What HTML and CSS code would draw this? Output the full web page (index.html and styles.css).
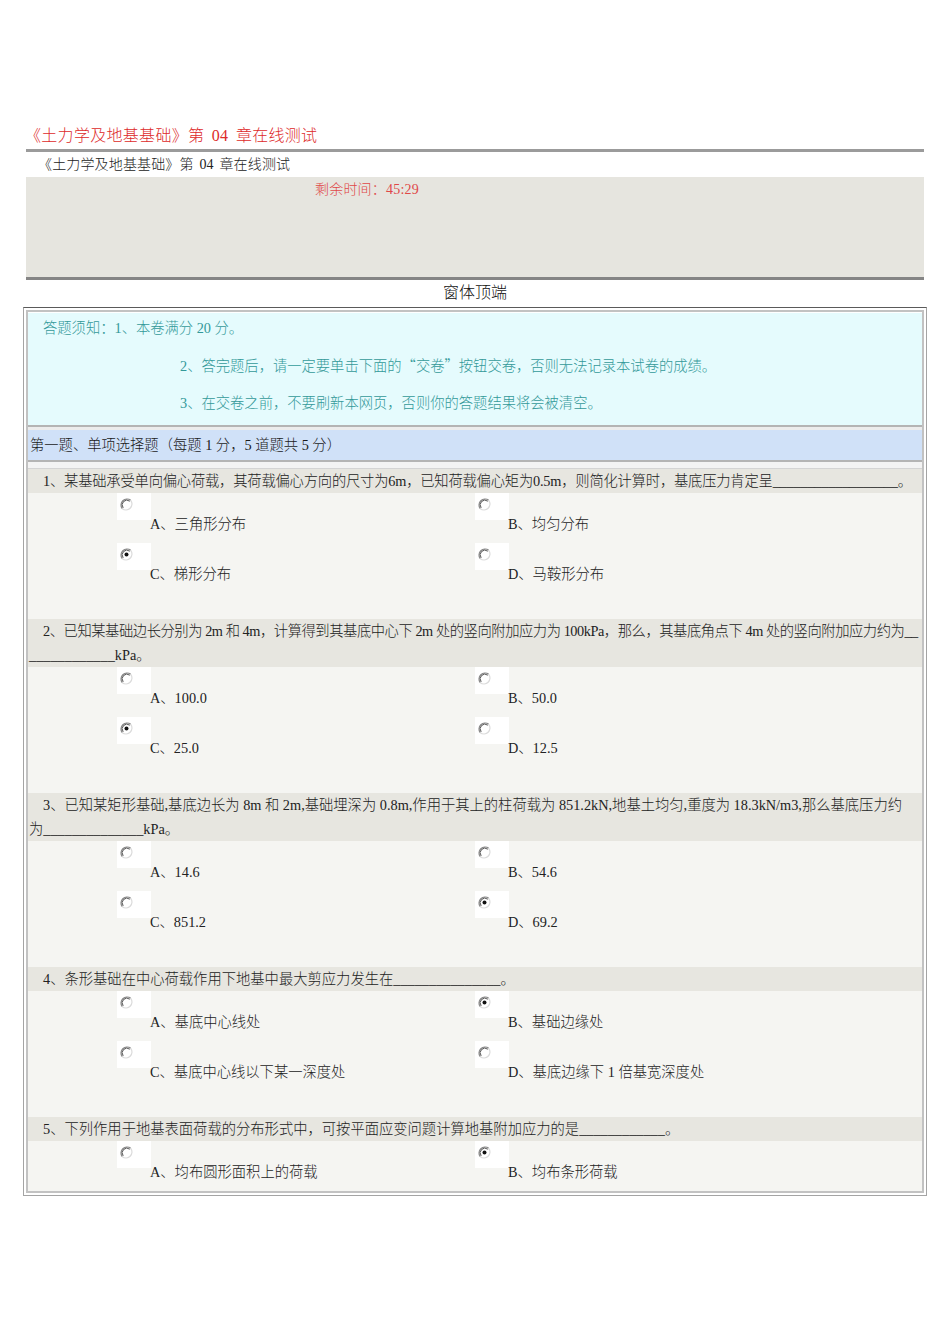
FILE: index.html
```html
<!DOCTYPE html>
<html lang="zh-CN">
<head>
<meta charset="utf-8">
<title>《土力学及地基基础》第 04 章在线测试</title>
<link rel="stylesheet" href="styles.css">
</head>
<body>
<div class="page">
  <h1 class="title">《土力学及地基基础》第 04 章在线测试</h1>
  <div class="rule"></div>
  <div class="subtitle">《土力学及地基基础》第 04 章在线测试</div>
  <div class="timerbox"><div class="timer">剩余时间：45:29</div></div>
  <div class="formtop">窗体顶端</div>

  <div class="paper">
    <div class="paper-inner">
      <div class="instr">
        <div class="il il1">答题须知：1、本卷满分 20 分。</div>
        <div class="il il2">2、答完题后，请一定要单击下面的<span class="cjk">“交卷”</span>按钮交卷，否则无法记录本试卷的成绩。</div>
        <div class="il il2">3、在交卷之前，不要刷新本网页，否则你的答题结果将会被清空。</div>
      </div>
      <div class="sep"></div>
      <div class="section">第一题、单项选择题（每题 1 分，5 道题共 5 分）</div>
      <div class="sep2"></div>

      <div class="q">
        <div class="qh"><span class="tight1">1、某基础承受单向偏心荷载，其荷载偏心方向的尺寸为6m，已知荷载偏心矩为0.5m，则简化计算时，基底压力肯定呈__________________。</span></div>
        <div class="opts">
          <div class="opt"><span class="rbox"><svg class="radio" width="13" height="13" viewBox="0 0 13 13"><circle cx="6.5" cy="6.5" r="5.5" fill="#fff"/><path d="M2.3 10.7A6 6 0 0 1 10.7 2.3" fill="none" stroke="#8a8a8a" stroke-width="1.4"/><path d="M10.7 2.3A6 6 0 0 1 2.3 10.7" fill="none" stroke="#dcdcdc" stroke-width="1.4"/><path d="M3.2 9.8A4.7 4.7 0 0 1 9.8 3.2" fill="none" stroke="#555" stroke-width="1"/></svg></span><div class="lbl">A、三角形分布</div></div>
          <div class="opt"><span class="rbox"><svg class="radio" width="13" height="13" viewBox="0 0 13 13"><circle cx="6.5" cy="6.5" r="5.5" fill="#fff"/><path d="M2.3 10.7A6 6 0 0 1 10.7 2.3" fill="none" stroke="#8a8a8a" stroke-width="1.4"/><path d="M10.7 2.3A6 6 0 0 1 2.3 10.7" fill="none" stroke="#dcdcdc" stroke-width="1.4"/><path d="M3.2 9.8A4.7 4.7 0 0 1 9.8 3.2" fill="none" stroke="#555" stroke-width="1"/></svg></span><div class="lbl">B、均匀分布</div></div>
          <div class="opt"><span class="rbox"><svg class="radio" width="13" height="13" viewBox="0 0 13 13"><circle cx="6.5" cy="6.5" r="5.5" fill="#fff"/><path d="M2.3 10.7A6 6 0 0 1 10.7 2.3" fill="none" stroke="#8a8a8a" stroke-width="1.4"/><path d="M10.7 2.3A6 6 0 0 1 2.3 10.7" fill="none" stroke="#dcdcdc" stroke-width="1.4"/><path d="M3.2 9.8A4.7 4.7 0 0 1 9.8 3.2" fill="none" stroke="#555" stroke-width="1"/><circle cx="6.5" cy="6.5" r="2" fill="#111"/></svg></span><div class="lbl">C、梯形分布</div></div>
          <div class="opt"><span class="rbox"><svg class="radio" width="13" height="13" viewBox="0 0 13 13"><circle cx="6.5" cy="6.5" r="5.5" fill="#fff"/><path d="M2.3 10.7A6 6 0 0 1 10.7 2.3" fill="none" stroke="#8a8a8a" stroke-width="1.4"/><path d="M10.7 2.3A6 6 0 0 1 2.3 10.7" fill="none" stroke="#dcdcdc" stroke-width="1.4"/><path d="M3.2 9.8A4.7 4.7 0 0 1 9.8 3.2" fill="none" stroke="#555" stroke-width="1"/></svg></span><div class="lbl">D、马鞍形分布</div></div>
        </div>
      </div>

      <div class="q">
        <div class="qh"><span class="tight2">2、已知某基础边长分别为 2m 和 4m，计算得到其基底中心下 2m 处的竖向附加应力为 100kPa，那么，其基底角点下 4m 处的竖向附加应力约为__</span><br>____________kPa。</div>
        <div class="opts">
          <div class="opt"><span class="rbox"><svg class="radio" width="13" height="13" viewBox="0 0 13 13"><circle cx="6.5" cy="6.5" r="5.5" fill="#fff"/><path d="M2.3 10.7A6 6 0 0 1 10.7 2.3" fill="none" stroke="#8a8a8a" stroke-width="1.4"/><path d="M10.7 2.3A6 6 0 0 1 2.3 10.7" fill="none" stroke="#dcdcdc" stroke-width="1.4"/><path d="M3.2 9.8A4.7 4.7 0 0 1 9.8 3.2" fill="none" stroke="#555" stroke-width="1"/></svg></span><div class="lbl">A、100.0</div></div>
          <div class="opt"><span class="rbox"><svg class="radio" width="13" height="13" viewBox="0 0 13 13"><circle cx="6.5" cy="6.5" r="5.5" fill="#fff"/><path d="M2.3 10.7A6 6 0 0 1 10.7 2.3" fill="none" stroke="#8a8a8a" stroke-width="1.4"/><path d="M10.7 2.3A6 6 0 0 1 2.3 10.7" fill="none" stroke="#dcdcdc" stroke-width="1.4"/><path d="M3.2 9.8A4.7 4.7 0 0 1 9.8 3.2" fill="none" stroke="#555" stroke-width="1"/></svg></span><div class="lbl">B、50.0</div></div>
          <div class="opt"><span class="rbox"><svg class="radio" width="13" height="13" viewBox="0 0 13 13"><circle cx="6.5" cy="6.5" r="5.5" fill="#fff"/><path d="M2.3 10.7A6 6 0 0 1 10.7 2.3" fill="none" stroke="#8a8a8a" stroke-width="1.4"/><path d="M10.7 2.3A6 6 0 0 1 2.3 10.7" fill="none" stroke="#dcdcdc" stroke-width="1.4"/><path d="M3.2 9.8A4.7 4.7 0 0 1 9.8 3.2" fill="none" stroke="#555" stroke-width="1"/><circle cx="6.5" cy="6.5" r="2" fill="#111"/></svg></span><div class="lbl">C、25.0</div></div>
          <div class="opt"><span class="rbox"><svg class="radio" width="13" height="13" viewBox="0 0 13 13"><circle cx="6.5" cy="6.5" r="5.5" fill="#fff"/><path d="M2.3 10.7A6 6 0 0 1 10.7 2.3" fill="none" stroke="#8a8a8a" stroke-width="1.4"/><path d="M10.7 2.3A6 6 0 0 1 2.3 10.7" fill="none" stroke="#dcdcdc" stroke-width="1.4"/><path d="M3.2 9.8A4.7 4.7 0 0 1 9.8 3.2" fill="none" stroke="#555" stroke-width="1"/></svg></span><div class="lbl">D、12.5</div></div>
        </div>
      </div>

      <div class="q">
        <div class="qh">3、已知某矩形基础,基底边长为 8m 和 2m,基础埋深为 0.8m,作用于其上的柱荷载为 851.2kN,地基土均匀,重度为 18.3kN/m3,那么基底压力约<br>为______________kPa。</div>
        <div class="opts">
          <div class="opt"><span class="rbox"><svg class="radio" width="13" height="13" viewBox="0 0 13 13"><circle cx="6.5" cy="6.5" r="5.5" fill="#fff"/><path d="M2.3 10.7A6 6 0 0 1 10.7 2.3" fill="none" stroke="#8a8a8a" stroke-width="1.4"/><path d="M10.7 2.3A6 6 0 0 1 2.3 10.7" fill="none" stroke="#dcdcdc" stroke-width="1.4"/><path d="M3.2 9.8A4.7 4.7 0 0 1 9.8 3.2" fill="none" stroke="#555" stroke-width="1"/></svg></span><div class="lbl">A、14.6</div></div>
          <div class="opt"><span class="rbox"><svg class="radio" width="13" height="13" viewBox="0 0 13 13"><circle cx="6.5" cy="6.5" r="5.5" fill="#fff"/><path d="M2.3 10.7A6 6 0 0 1 10.7 2.3" fill="none" stroke="#8a8a8a" stroke-width="1.4"/><path d="M10.7 2.3A6 6 0 0 1 2.3 10.7" fill="none" stroke="#dcdcdc" stroke-width="1.4"/><path d="M3.2 9.8A4.7 4.7 0 0 1 9.8 3.2" fill="none" stroke="#555" stroke-width="1"/></svg></span><div class="lbl">B、54.6</div></div>
          <div class="opt"><span class="rbox"><svg class="radio" width="13" height="13" viewBox="0 0 13 13"><circle cx="6.5" cy="6.5" r="5.5" fill="#fff"/><path d="M2.3 10.7A6 6 0 0 1 10.7 2.3" fill="none" stroke="#8a8a8a" stroke-width="1.4"/><path d="M10.7 2.3A6 6 0 0 1 2.3 10.7" fill="none" stroke="#dcdcdc" stroke-width="1.4"/><path d="M3.2 9.8A4.7 4.7 0 0 1 9.8 3.2" fill="none" stroke="#555" stroke-width="1"/></svg></span><div class="lbl">C、851.2</div></div>
          <div class="opt"><span class="rbox"><svg class="radio" width="13" height="13" viewBox="0 0 13 13"><circle cx="6.5" cy="6.5" r="5.5" fill="#fff"/><path d="M2.3 10.7A6 6 0 0 1 10.7 2.3" fill="none" stroke="#8a8a8a" stroke-width="1.4"/><path d="M10.7 2.3A6 6 0 0 1 2.3 10.7" fill="none" stroke="#dcdcdc" stroke-width="1.4"/><path d="M3.2 9.8A4.7 4.7 0 0 1 9.8 3.2" fill="none" stroke="#555" stroke-width="1"/><circle cx="6.5" cy="6.5" r="2" fill="#111"/></svg></span><div class="lbl">D、69.2</div></div>
        </div>
      </div>

      <div class="q">
        <div class="qh">4、条形基础在中心荷载作用下地基中最大剪应力发生在_______________。</div>
        <div class="opts">
          <div class="opt"><span class="rbox"><svg class="radio" width="13" height="13" viewBox="0 0 13 13"><circle cx="6.5" cy="6.5" r="5.5" fill="#fff"/><path d="M2.3 10.7A6 6 0 0 1 10.7 2.3" fill="none" stroke="#8a8a8a" stroke-width="1.4"/><path d="M10.7 2.3A6 6 0 0 1 2.3 10.7" fill="none" stroke="#dcdcdc" stroke-width="1.4"/><path d="M3.2 9.8A4.7 4.7 0 0 1 9.8 3.2" fill="none" stroke="#555" stroke-width="1"/></svg></span><div class="lbl">A、基底中心线处</div></div>
          <div class="opt"><span class="rbox"><svg class="radio" width="13" height="13" viewBox="0 0 13 13"><circle cx="6.5" cy="6.5" r="5.5" fill="#fff"/><path d="M2.3 10.7A6 6 0 0 1 10.7 2.3" fill="none" stroke="#8a8a8a" stroke-width="1.4"/><path d="M10.7 2.3A6 6 0 0 1 2.3 10.7" fill="none" stroke="#dcdcdc" stroke-width="1.4"/><path d="M3.2 9.8A4.7 4.7 0 0 1 9.8 3.2" fill="none" stroke="#555" stroke-width="1"/><circle cx="6.5" cy="6.5" r="2" fill="#111"/></svg></span><div class="lbl">B、基础边缘处</div></div>
          <div class="opt"><span class="rbox"><svg class="radio" width="13" height="13" viewBox="0 0 13 13"><circle cx="6.5" cy="6.5" r="5.5" fill="#fff"/><path d="M2.3 10.7A6 6 0 0 1 10.7 2.3" fill="none" stroke="#8a8a8a" stroke-width="1.4"/><path d="M10.7 2.3A6 6 0 0 1 2.3 10.7" fill="none" stroke="#dcdcdc" stroke-width="1.4"/><path d="M3.2 9.8A4.7 4.7 0 0 1 9.8 3.2" fill="none" stroke="#555" stroke-width="1"/></svg></span><div class="lbl">C、基底中心线以下某一深度处</div></div>
          <div class="opt"><span class="rbox"><svg class="radio" width="13" height="13" viewBox="0 0 13 13"><circle cx="6.5" cy="6.5" r="5.5" fill="#fff"/><path d="M2.3 10.7A6 6 0 0 1 10.7 2.3" fill="none" stroke="#8a8a8a" stroke-width="1.4"/><path d="M10.7 2.3A6 6 0 0 1 2.3 10.7" fill="none" stroke="#dcdcdc" stroke-width="1.4"/><path d="M3.2 9.8A4.7 4.7 0 0 1 9.8 3.2" fill="none" stroke="#555" stroke-width="1"/></svg></span><div class="lbl">D、基底边缘下 1 倍基宽深度处</div></div>
        </div>
      </div>

      <div class="q">
        <div class="qh">5、下列作用于地基表面荷载的分布形式中，可按平面应变问题计算地基附加应力的是____________。</div>
        <div class="opts last">
          <div class="opt"><span class="rbox"><svg class="radio" width="13" height="13" viewBox="0 0 13 13"><circle cx="6.5" cy="6.5" r="5.5" fill="#fff"/><path d="M2.3 10.7A6 6 0 0 1 10.7 2.3" fill="none" stroke="#8a8a8a" stroke-width="1.4"/><path d="M10.7 2.3A6 6 0 0 1 2.3 10.7" fill="none" stroke="#dcdcdc" stroke-width="1.4"/><path d="M3.2 9.8A4.7 4.7 0 0 1 9.8 3.2" fill="none" stroke="#555" stroke-width="1"/></svg></span><div class="lbl">A、均布圆形面积上的荷载</div></div>
          <div class="opt"><span class="rbox"><svg class="radio" width="13" height="13" viewBox="0 0 13 13"><circle cx="6.5" cy="6.5" r="5.5" fill="#fff"/><path d="M2.3 10.7A6 6 0 0 1 10.7 2.3" fill="none" stroke="#8a8a8a" stroke-width="1.4"/><path d="M10.7 2.3A6 6 0 0 1 2.3 10.7" fill="none" stroke="#dcdcdc" stroke-width="1.4"/><path d="M3.2 9.8A4.7 4.7 0 0 1 9.8 3.2" fill="none" stroke="#555" stroke-width="1"/><circle cx="6.5" cy="6.5" r="2" fill="#111"/></svg></span><div class="lbl">B、均布条形荷载</div></div>
        </div>
      </div>
    </div>
  </div>
</div>
</body>
</html>
```

FILE: styles.css
```css
html, body {
  margin: 0;
  padding: 0;
  background: #ffffff;
}

body {
  font-family: "Liberation Serif", "Noto Sans CJK SC", serif;
  font-weight: 300;
  color: #222222;
}

.cjk {
  font-family: "Noto Sans CJK SC", sans-serif;
}

.page {
  padding-top: 126px;
  padding-bottom: 20px;
}

.title {
  margin: 0 0 3px 25px;
  font-size: 16px;
  line-height: 20px;
  font-weight: 300;
  color: #dd2a2a;
  letter-spacing: 0.3px;
  word-spacing: 0.2em;
}

.rule {
  margin-left: 26px;
  width: 898px;
  height: 3px;
  background: #9b9b9b;
}

.subtitle {
  margin-left: 26px;
  padding-left: 12px;
  font-size: 14px;
  line-height: 25px;
  color: #222222;
  word-spacing: 0.15em;
  letter-spacing: 0.15px;
}

.timerbox {
  margin-left: 26px;
  width: 898px;
  height: 96px;
  padding-top: 4px;
  background: #e6e5df;
  border-bottom: 3px solid #858585;
}

.timer {
  margin-left: 289px;
  font-size: 14px;
  line-height: 18px;
  color: #e04848;
  letter-spacing: 0.2px;
}

.formtop {
  text-align: center;
  font-size: 16px;
  line-height: 26px;
  margin-bottom: 1px;
  color: #111111;
}

.paper {
  margin-left: 23px;
  width: 904px;
  box-sizing: border-box;
  border: 1px solid #a4a4a4;
  border-top-color: #5a5a5a;
  padding: 2px;
  background: #ffffff;
}

.paper-inner {
  border: 2px solid #c2c2c2;
  padding-top: 1px;
  font-size: 14.3px;
}

.instr {
  background: #e5fbfd;
  color: #339999;
  height: 112px;
  box-sizing: border-box;
  padding-top: 3px;
}

.il {
  line-height: 24px;
  white-space: nowrap;
}

.il1 {
  padding-left: 15px;
}

.il2 {
  padding-left: 152px;
  margin-top: 13px;
}

.sep {
  height: 3px;
  border-top: 2px solid #b4b4b4;
  background: #ececec;
}

.section {
  background: #d0e1f8;
  height: 30px;
  line-height: 30px;
  padding-left: 2px;
  color: #1a1a1a;
}

.sep2 {
  height: 6px;
  border-top: 2px solid #b4b4b4;
  border-bottom: 1px solid #d4d4d4;
  background: #f3f3f3;
}

.qh {
  background: #e7e6e0;
  line-height: 24px;
  padding-left: 1px;
  text-indent: 14px;
  color: #222222;
  white-space: nowrap;
}

.tight1 {
  letter-spacing: -0.2px;
}

.tight2 {
  letter-spacing: -0.45px;
}

.opts {
  background: #f5f5f2;
  padding: 0 0 26px 89px;
  display: grid;
  grid-template-columns: 358px 1fr;
}

.opts.last {
  padding-bottom: 0;
}

.opt {
  height: 50px;
}

.rbox {
  display: block;
  width: 34px;
  height: 27px;
  box-sizing: border-box;
  padding: 5px 0 0 3px;
  background: #ffffff;
}

.radio {
  display: block;
}

.lbl {
  margin-top: -4px;
  padding-left: 33px;
  line-height: 16px;
  color: #222222;
}
```
